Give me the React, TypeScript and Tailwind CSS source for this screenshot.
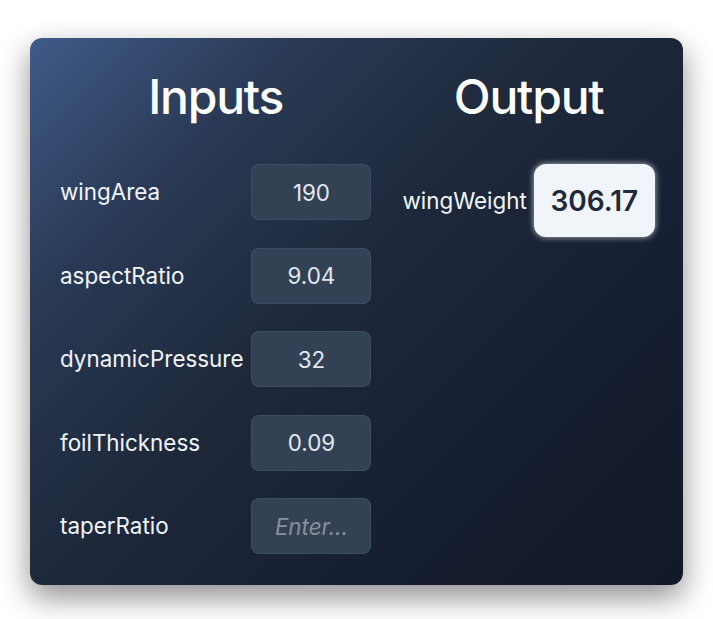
import { useState } from "react";

const inputs = [
  { name: "wingArea", value: "190" },
  { name: "aspectRatio", value: "9.04" },
  { name: "dynamicPressure", value: "32" },
  { name: "foilThickness", value: "0.09" },
  { name: "taperRatio", value: "" },
];

function App() {
  const [values, setValues] = useState(inputs.map((i) => i.value));

  return (
    <div className="min-h-screen bg-white font-['Inter',sans-serif] pt-[38px]">
      <div className="mx-auto w-[653px] rounded-xl bg-[linear-gradient(135deg,#3f5b88_0%,#2a3a56_22%,#1e293b_45%,#161e31_75%,#111827_100%)] shadow-[0_12px_30px_rgba(0,0,0,0.45)] px-[30px] pt-[35px] pb-[31px] flex gap-[31px]">
        {/* Inputs */}
        <div className="flex flex-col">
          <h2 className="text-5xl leading-none tracking-tight font-medium text-white text-center mb-[43px]">Inputs</h2>
          <div className="grid grid-cols-[auto_120px] gap-x-2 gap-y-[27.5px] items-center">
            {inputs.map((input, i) => (
              <div key={input.name} className="contents">
                <label className="text-[1.4rem] text-slate-100">{input.name}</label>
                <input
                  value={values[i]}
                  placeholder="Enter..."
                  onChange={(e) => {
                    const next = [...values];
                    next[i] = e.target.value;
                    setValues(next);
                  }}
                  className="h-14 w-[120px] rounded-lg border border-slate-600/60 bg-[#334155] text-center text-[1.4rem] text-slate-200 outline-none placeholder:italic placeholder:text-[#8a8f98]"
                />
              </div>
            ))}
          </div>
        </div>

        {/* Output */}
        <div className="flex flex-col flex-1">
          <h2 className="text-5xl leading-none tracking-tight font-medium text-white text-center mb-[43px]">Output</h2>
          <div className="flex items-center gap-[7px]">
            <span className="text-[1.4rem] text-slate-100">wingWeight</span>
            <div className="h-[73px] w-[121px] flex items-center justify-center rounded-xl bg-[#f1f5f9] text-[28px] font-semibold text-[#1e293b] shadow-[0_0_6px_rgba(255,255,255,0.7)]">
              306.17
            </div>
          </div>
        </div>
      </div>
    </div>
  );
}

export default App;
